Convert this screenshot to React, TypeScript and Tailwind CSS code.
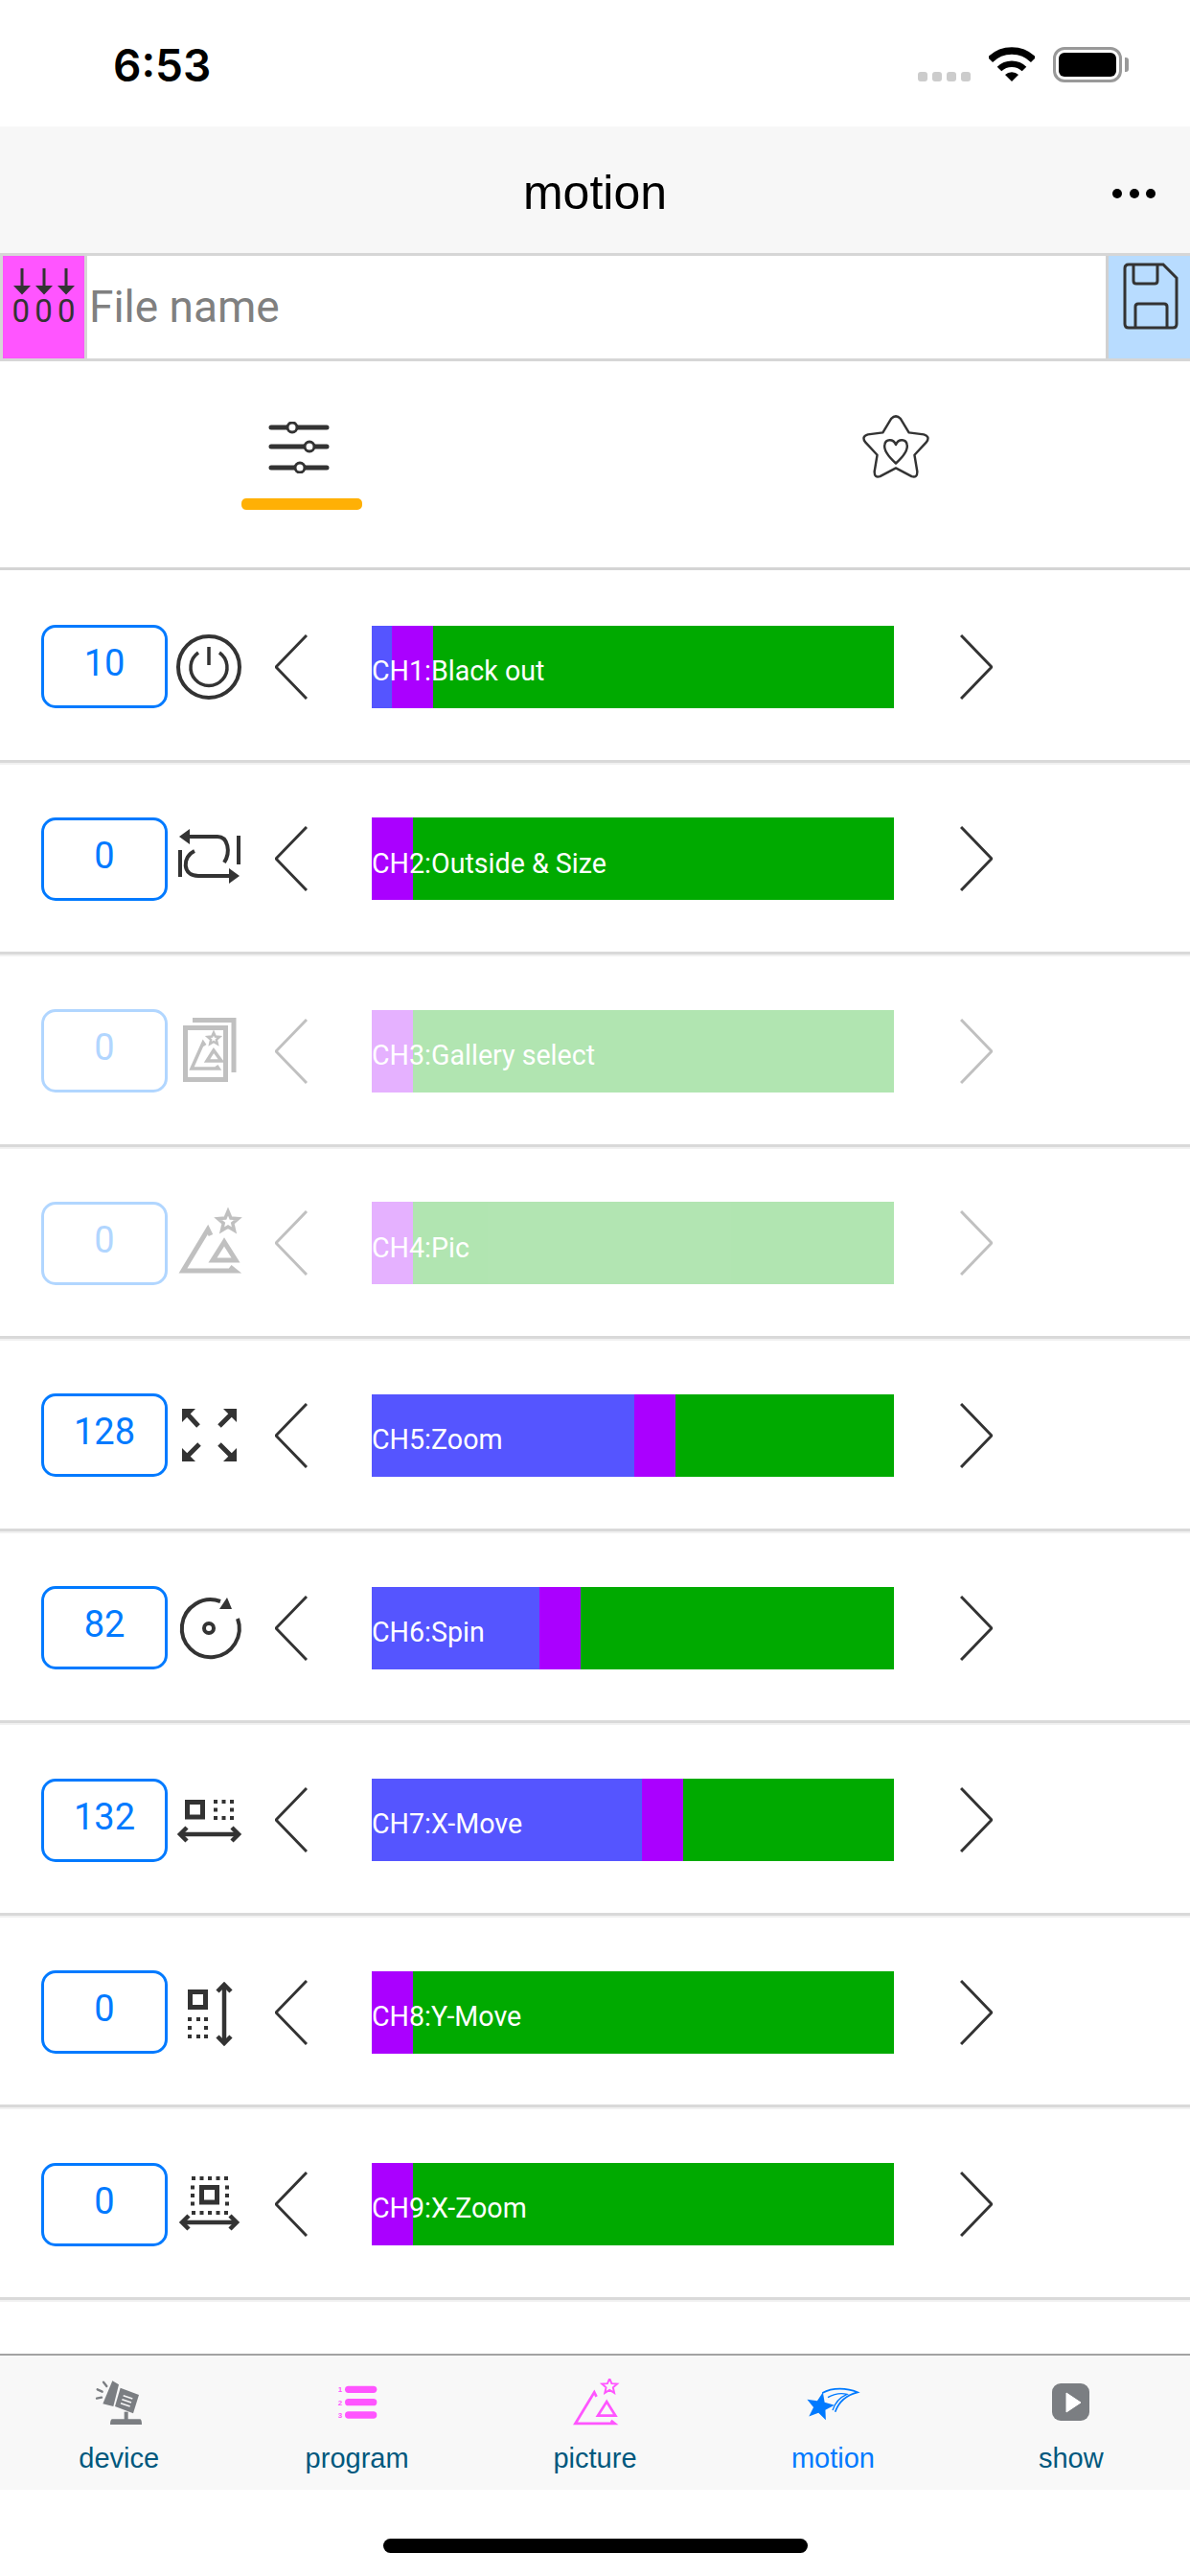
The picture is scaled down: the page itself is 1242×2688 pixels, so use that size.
import type { ReactNode } from 'react'

const INK = '#333333'

function starPoints(cx: number, cy: number, outer: number, inner: number) {
  const pts: string[] = []
  for (let i = 0; i < 10; i++) {
    const r = i % 2 === 0 ? outer : inner
    const a = (Math.PI / 5) * i - Math.PI / 2
    pts.push(`${(cx + r * Math.cos(a)).toFixed(1)},${(cy + r * Math.sin(a)).toFixed(1)}`)
  }
  return pts.join(' ')
}

function Glyph({ children }: { children: ReactNode }) {
  return (
    <svg viewBox="0 0 76 76" className="w-[76px] h-[76px]" fill="none" stroke={INK} strokeWidth={4}>
      {children}
    </svg>
  )
}

function Dots({ points }: { points: number[][] }) {
  return (
    <g fill={INK} stroke="none">
      {points.map(([x, y]) => <rect key={`${x}-${y}`} x={x} y={y} width={4} height={4} />)}
    </g>
  )
}

function HArrow({ y, x1, x2 }: { y: number; x1: number; x2: number }) {
  return (
    <g strokeWidth={4.5}>
      <path d={`M${x1 + 1} ${y}H${x2 - 1}`} />
      <path d={`M${x1 + 8} ${y - 7}L${x1 + 1} ${y}L${x1 + 8} ${y + 7}M${x2 - 8} ${y - 7}L${x2 - 1} ${y}L${x2 - 8} ${y + 7}`} />
    </g>
  )
}

function PowerIcon() {
  return (
    <Glyph>
      <circle cx="38" cy="38" r="32" />
      <path d="M27 23A19 19 0 1 0 49 23" strokeWidth={3.5} />
      <path d="M38 17V36" strokeWidth={3.5} />
    </Glyph>
  )
}

function RepeatIcon() {
  return (
    <Glyph>
      <path d="M17 15H47C58 15 61 31 54 42" />
      <path d="M7 15L18 7V23Z" fill={INK} stroke="none" />
      <path d="M69 14V44" />
      <path d="M8 29V57" />
      <path d="M23 30C10 36 10 56 27 56H60" />
      <path d="M70 56L59 48V64Z" fill={INK} stroke="none" />
    </Glyph>
  )
}

function PicMarks({ width = 5 }: { width?: number }) {
  return (
    <g strokeWidth={width}>
      <path d="M40 30L37 24L11 67H65L60 63" />
      <path d="M54 37L42 56H66Z" />
      <polygon points={starPoints(58, 16, 11, 5)} strokeWidth={width * 0.7} />
    </g>
  )
}

function GalleryIcon() {
  return (
    <Glyph>
      <path d="M21 5.5H64V60" strokeWidth={5} />
      <rect x="13.5" y="13.5" width="42" height="54" strokeWidth={5} />
      <path d="M34 32L32 29L20 56H48L46 53" strokeWidth={3.5} />
      <path d="M43 37L36 48H51Z" strokeWidth={3.5} />
      <polygon points={starPoints(43, 25, 6.5, 3)} strokeWidth={2.5} />
    </Glyph>
  )
}

function PictureIcon() {
  return <Glyph><PicMarks /></Glyph>
}

function ZoomIcon() {
  return (
    <Glyph>
      <g strokeWidth={5}>
        <path d="M15 15L27 28M62 15L49 28M15 60L28 47M62 60L49 47" />
      </g>
      <g fill={INK} stroke="none">
        <path d="M10 10H24L10 24Z" />
        <path d="M67 10H53L67 24Z" />
        <path d="M10 65H24L10 51Z" />
        <path d="M67 65H53L67 51Z" />
      </g>
    </Glyph>
  )
}

function SpinIcon() {
  return (
    <Glyph>
      <path d="M68 28A30 30 0 1 1 50 10" strokeWidth={4} />
      <path d="M57 6L62 18H49Z" fill={INK} stroke="none" />
      <circle cx="38" cy="38" r="5" strokeWidth={4} />
    </Glyph>
  )
}

function XMoveIcon() {
  return (
    <Glyph>
      <rect x="15.5" y="19.5" width="16" height="15.5" strokeWidth={5} />
      <Dots points={[[43, 17], [51.5, 17], [60, 17], [43, 25.5], [60, 25.5], [43, 34], [51.5, 34], [60, 34]]} />
      <HArrow y={53} x1={7} x2={70} />
    </Glyph>
  )
}

function YMoveIcon() {
  return (
    <Glyph>
      <rect x="18.5" y="16.5" width="16" height="16" strokeWidth={5} />
      <Dots points={[[16, 43], [25, 43], [33, 43], [16, 52], [33, 52], [16, 61], [25, 61], [33, 61]]} />
      <g strokeWidth={4.5}>
        <path d="M54 9V70" />
        <path d="M47 16L54 9L61 16M47 63L54 70L61 63" />
      </g>
    </Glyph>
  )
}

function XZoomIcon() {
  const steps = [19, 27.5, 36, 44.5, 53]
  const edge: number[][] = []
  steps.forEach(s => {
    edge.push([s + 1, 9], [s + 1, 45])
    if (s !== 19 && s !== 53) edge.push([19, s - 9], [55, s - 9])
  })
  return (
    <Glyph>
      <rect x="30.5" y="20.5" width="16" height="15.5" strokeWidth={5} />
      <Dots points={edge} />
      <HArrow y={57} x1={9} x2={68} />
    </Glyph>
  )
}

function Chevron({ right = false }: { right?: boolean }) {
  return (
    <svg viewBox="0 0 34 68" className="w-[34px] h-[68px]" fill="none" stroke={INK} strokeWidth={3}>
      <path d={right ? 'M1 1L33 34L1 67' : 'M33 1L1 34L33 67'} />
    </svg>
  )
}

const channels = [
  { value: 10, label: 'CH1:Black out', icon: <PowerIcon /> },
  { value: 0, label: 'CH2:Outside & Size', icon: <RepeatIcon /> },
  { value: 0, label: 'CH3:Gallery select', icon: <GalleryIcon />, disabled: true },
  { value: 0, label: 'CH4:Pic', icon: <PictureIcon />, disabled: true },
  { value: 128, label: 'CH5:Zoom', icon: <ZoomIcon /> },
  { value: 82, label: 'CH6:Spin', icon: <SpinIcon /> },
  { value: 132, label: 'CH7:X-Move', icon: <XMoveIcon /> },
  { value: 0, label: 'CH8:Y-Move', icon: <YMoveIcon /> },
  { value: 0, label: 'CH9:X-Zoom', icon: <XZoomIcon /> },
]

function ChannelRow({ value, label, icon, disabled }: { value: number; label: string; icon: ReactNode; disabled?: boolean }) {
  return (
    <div className="h-[200.56px] border-b-[3px] border-[#d9d9d9] shadow-[0_2px_0_#f1f1f1] flex items-center pl-[43px] pt-[4px]">
      <div className={`flex items-center ${disabled ? 'opacity-30' : ''}`}>
        <div className="w-[132px] h-[87px] border-[3px] border-[#007aff] rounded-[15px] flex items-center justify-center pb-[7px] text-[38px] leading-none text-[#007aff]">
          {value}
        </div>
        <div className="ml-[5px] w-[76px] h-[76px]">{icon}</div>
        <div className="ml-[31px]"><Chevron /></div>
        <div className="relative ml-[67px] w-[545px] h-[86px] flex">
          <div className="bg-[#5555ff]" style={{ width: (value * 545) / 255 }} />
          <div className="w-[43px] bg-[#aa00ff]" />
          <div className="flex-1 bg-[#00aa00]" />
          <div className="absolute inset-0 flex items-center pt-[9px] text-[28.6px] leading-none text-white">{label}</div>
        </div>
        <div className="ml-[69px]"><Chevron right /></div>
      </div>
    </div>
  )
}

function StatusBar() {
  return (
    <div className="h-[132px] flex justify-between pl-[118px] pr-[64px] bg-white">
      <div className="mt-[40px] font-['Inter',sans-serif] font-semibold text-[46px] leading-[56px] text-black">6:53</div>
      <div className="flex items-start">
        <div className="mt-[75px] flex gap-[5px]">
          {[0, 1, 2, 3].map(i => <div key={i} className="w-[10px] h-[10px] rounded-[3px] bg-[#cccccc]" />)}
        </div>
        <svg viewBox="0 0 48 36" className="ml-[19px] mt-[49px] w-[48px] h-[36px]" fill="none" stroke="#000">
          <path d="M1.4 13.4A32 32 0 0 1 46.6 13.4" strokeWidth={7.5} />
          <path d="M11 23A18.5 18.5 0 0 1 37 23" strokeWidth={6.5} />
          <path d="M24 36L17 29A10 10 0 0 1 31 29Z" fill="#000" stroke="none" />
        </svg>
        <div className="ml-[19px] mt-[49px] flex items-center">
          <div className="w-[72px] h-[37px] border-[3px] border-[#999999] rounded-[12px] p-[3px]">
            <div className="w-full h-full bg-black rounded-[6px]" />
          </div>
          <div className="ml-[3px] w-[4px] h-[15px] bg-[#999999] rounded-r-[3px]" />
        </div>
      </div>
    </div>
  )
}

function NavBar() {
  return (
    <div className="relative h-[132px] bg-[#f7f7f7] flex items-center justify-center">
      <span className="pt-[5px] font-['Liberation_Sans',sans-serif] text-[50px] leading-none text-black">motion</span>
      <div className="absolute right-[36px] top-[65px] flex gap-[7.5px]">
        {[0, 1, 2].map(i => <div key={i} className="w-[10px] h-[10px] rounded-full bg-black" />)}
      </div>
    </div>
  )
}

function FileRow() {
  return (
    <div className="h-[113px] flex border-y-[3px] border-[#d6d6d6]">
      <div className="w-[91px] border-x-[3px] border-[#d6d6d6] bg-[#ff55ff] flex flex-col items-center pt-[13px]">
        <svg viewBox="0 0 64 28" className="w-[64px] h-[28px]" fill={INK} stroke={INK} strokeWidth={3}>
          <path d="M9 0V20M32 0V20M55 0V20" />
          <path d="M0 18H18L9 27.5ZM23 18H41L32 27.5ZM46 18H64L55 27.5Z" stroke="none" />
        </svg>
        <div className="mt-[2px] flex w-[66px] justify-between text-[33px] leading-[30px] text-[#333333]">
          <span>0</span><span>0</span><span>0</span>
        </div>
      </div>
      <input
        placeholder="File name"
        className="flex-1 min-w-0 bg-white pl-[2px] text-[46px] outline-none placeholder:text-[#808080]"
      />
      <div className="w-[88px] border-l-[3px] border-[#d0d0d0] bg-[#b8dcff] pl-[15px] pt-[7px]">
        <svg viewBox="0 0 58 70" className="w-[58px] h-[70px]" fill="none" stroke={INK} strokeWidth={3}>
          <path d="M6 2H42L56 16V64Q56 68 52 68H6Q2 68 2 64V6Q2 2 6 2Z" />
          <path d="M11 2V19Q11 22 14 22H33Q36 22 36 19V2" />
          <path d="M13 68V46Q13 43 16 43H43Q46 43 46 46V68" />
        </svg>
      </div>
    </div>
  )
}

function ModeTabs() {
  return (
    <div className="h-[218px] border-b-[3px] border-[#d4d4d4] flex">
      <div className="w-1/2 flex flex-col items-center pt-[63px]">
        <svg viewBox="0 0 64 54" className="ml-[2px] w-[64px] h-[54px]" fill="#fff" stroke={INK}>
          <path d="M3 6H61M3 26H61M3 48H61" strokeWidth={5} strokeLinecap="round" />
          <circle cx="25" cy="6" r="5" strokeWidth={3} />
          <circle cx="43" cy="26" r="5" strokeWidth={3} />
          <circle cx="33" cy="48" r="5" strokeWidth={3} />
        </svg>
        <div className="mt-[26px] ml-2 w-[126px] h-[12px] rounded-[5px] bg-[#ffb005]" />
      </div>
      <div className="w-1/2 flex justify-center pt-[54px] pl-[6px]">
        <svg viewBox="0 0 72 70" className="w-[70px] h-[70px]" fill="none" stroke={INK} strokeWidth={2.5} strokeLinejoin="round">
          <path d="M22 20L31 5Q36 0 41 5L50 20L66 22Q73 24 69 30L56 44L59 62Q59 69 53 67L36 58L19 67Q13 69 13 62L16 44L3 30Q-1 24 6 22Z" />
          <path d="M36 53C26 44 23 38 24 33C25 27 33 26 36 33C39 26 47 27 48 33C49 38 46 44 36 53Z" />
        </svg>
      </div>
    </div>
  )
}

const tabs = [
  {
    name: 'device',
    icon: (
      <svg viewBox="30 21 180 150" className="w-[60px] h-[50px]" fill="#7b7e82">
        <path d="M100 28L120 40L103 108L70 100Z" />
        <path d="M125 50L183 72L165 130L108 108Z" />
        <path d="M137 125H149V150H137Z" />
        <path d="M100 148H186Q192 148 192 165H93Q93 148 100 148Z" />
        <path d="M72 32L82 45M53 55L68 62M51 83L66 80" stroke="#7b7e82" strokeWidth={7} strokeLinecap="round" />
        <path d="M134 74L163 84M130 86L159 96M126 98L155 108" stroke="#f7f7f7" strokeWidth={5} />
      </svg>
    ),
  },
  {
    name: 'program',
    icon: (
      <svg viewBox="774 21 180 150" className="w-[60px] h-[50px]" fill="#ff55ff">
        {[44, 84, 124].map((y, i) => (
          <g key={y}>
            <rect x="825" y={y} width="100" height="22" rx="11" />
            <text x="803" y={y + 20} fontSize="24" fontWeight="700" fontFamily="Liberation Sans, sans-serif">{i + 1}</text>
          </g>
        ))}
      </svg>
    ),
  },
  {
    name: 'picture',
    icon: (
      <svg viewBox="8 3 60 50" className="w-[60px] h-[50px]" fill="none" stroke="#ff55ff" strokeWidth={3.5}>
        <g transform="translate(0 -1) scale(0.76) translate(12 0)"><PicMarks width={3.6} /></g>
      </svg>
    ),
  },
  {
    name: 'motion',
    active: true,
    icon: (
      <svg viewBox="750 21 180 150" className="w-[60px] h-[50px]" fill="none" stroke="#007aff">
        <polygon points={starPoints(800, 109, 46, 20)} fill="#007aff" stroke="none" transform="rotate(12 800 109)" />
        <path d="M808 66C840 48 885 50 918 64C885 72 860 92 848 125" strokeWidth={5} />
        <path d="M825 80C850 66 870 66 885 70C862 80 848 95 840 120" strokeWidth={4} />
      </svg>
    ),
  },
  {
    name: 'show',
    icon: (
      <svg viewBox="0 0 60 50" className="w-[60px] h-[50px]">
        <rect x="10" y="5" width="39" height="39" rx="9" fill="#7b7e82" />
        <path d="M25 15L40 25L25 35Z" fill="#fff" stroke="#fff" strokeWidth={1} strokeLinejoin="round" />
      </svg>
    ),
  },
]

function TabBar() {
  return (
    <div className="h-[142px] border-t-2 border-[#a3a3a3] bg-[#f8f8f8] flex pt-[24px] font-['Liberation_Sans',sans-serif]">
      {tabs.map(t => (
        <div key={t.name} className="flex-1 flex flex-col items-center">
          {t.icon}
          <span className={`mt-[17px] text-[29px] leading-[32px] ${t.active ? 'text-[#007aff]' : 'text-[#00587e]'}`}>{t.name}</span>
        </div>
      ))}
    </div>
  )
}

export default function App() {
  return (
    <div className="w-[1242px] h-[2688px] flex flex-col overflow-hidden bg-white font-['Roboto',sans-serif]">
      <StatusBar />
      <NavBar />
      <FileRow />
      <ModeTabs />
      <div className="flex-1 min-h-0 overflow-hidden">
        {channels.map(c => <ChannelRow key={c.label} {...c} />)}
      </div>
      <TabBar />
      <div className="h-[90px] flex justify-center pt-[51px]">
        <div className="w-[443px] h-[15px] rounded-full bg-black" />
      </div>
    </div>
  )
}
